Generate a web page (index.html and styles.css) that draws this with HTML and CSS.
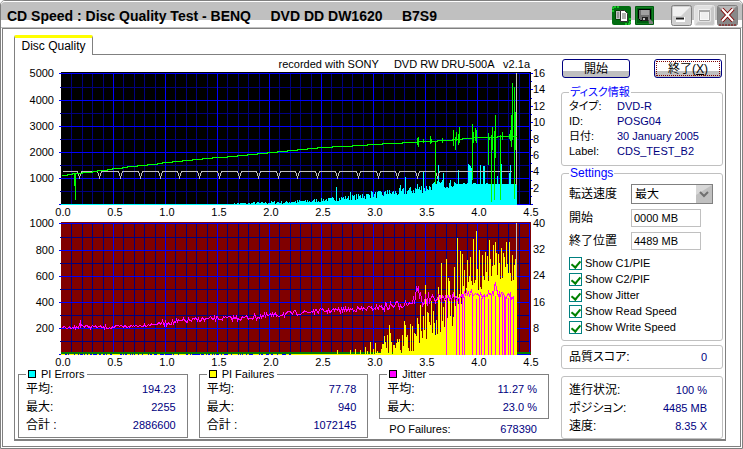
FILE: index.html
```html
<!DOCTYPE html>
<html lang="ja">
<head>
<meta charset="utf-8">
<title>CD Speed</title>
<link rel="stylesheet" href="styles.css">
</head>
<body>
<div class="window">
  <header class="titlebar">
    <h1 class="title">CD Speed : Disc Quality Test - BENQ     DVD DD DW1620     B7S9</h1>
    <div class="tools">
      <button class="tool" aria-label="Copy"><svg width="19" height="19" viewBox="0 0 19 19"><rect width="19" height="19" rx="2" fill="#006c10"/><path d="M1 6V1h6M18 12v6h-6" fill="none" stroke="#20e030" stroke-width="1.5" stroke-dasharray="2 1"/><path d="M3.500 4.500h5v9h-5z" fill="#c0c0c0" stroke="#004000"/><path d="M8.500 4.500h4l3 3v8h-7z" fill="#fff" stroke="#303030"/><path d="M10 8h4M10 10h4M10 12h4M5 7h2M5 9h2M5 11h2" stroke="#606060"/></svg></button>
      <button class="tool" aria-label="Save"><svg width="19" height="19" viewBox="0 0 19 19"><rect width="19" height="19" rx="1" fill="#005c10"/><rect x="1.500" y="1.500" width="16" height="16" fill="none" stroke="#108020"/><path d="M3.500 3.500h12v11h-10l-2-2z" fill="#707070" stroke="#000"/><path d="M6 4h8v5H6z" fill="#a0a0a0"/><path d="M7 11h6v4H7z" fill="#202020"/><path d="M8 12h2v2H8z" fill="#c0c0c0"/><path d="M13 11l5 5v2h-4z" fill="#808080"/></svg></button>
    </div>
    <div class="controls">
      <button class="control" aria-label="Minimize"><svg width="21" height="21" viewBox="0 0 21 21"><rect x=".5" y=".5" width="20" height="20" rx="2" fill="#d0d0d0" stroke="#808080"/><path d="M2 11V2h17L10 11z" fill="#f0f0f0"/><path d="M5 12h9v5H5z" fill="#fff"/><path d="M5 13.500h8" stroke="#202020" stroke-width="2"/></svg></button>
      <button class="control" aria-label="Maximize"><svg width="21" height="21" viewBox="0 0 21 21"><rect x=".5" y=".5" width="20" height="20" rx="2" fill="#c8c8c8" stroke="#e8e8e8"/><path d="M1 20V1h18z" fill="#e0e0e0"/><path d="M5.500 5.500h10v10h-10z" fill="#eee" stroke="#fff" stroke-width="2"/><path d="M5.500 5.500h10v10h-10z" fill="none" stroke="#a8a8a8"/><path d="M5 6h11" stroke="#a8a8a8" stroke-width="2"/></svg></button>
      <button class="control" aria-label="Close"><svg width="21" height="21" viewBox="0 0 21 21"><rect x=".5" y=".5" width="20" height="20" rx="2" fill="#888" stroke="#808080"/><path d="M1 1h19L10 10z" fill="#b8b8b8"/><path d="M5 4l11 12M16 4L5 16" stroke="#800000" stroke-width="4"/><path d="M5 4l11 12M16 4L5 16" stroke="#fff" stroke-width="2"/><path d="M2 20h17" stroke="#800000" stroke-dasharray="2 1"/></svg></button>
    </div>
  </header>
  <main class="client">
    <div class="tabs"><button class="tab">Disc Quality</button></div>
    <div class="panel">
      <section class="results">
        <svg id="charts" class="charts" viewBox="15 55 534 313" role="img" aria-label="Disc quality charts"></svg>
        <div class="stats">
          <fieldset class="stat">
            <legend><i class="swatch cyan"></i>PI Errors</legend>
            <dl class="rows"><div><dt>平均:</dt><dd>194.23</dd></div><div><dt>最大:</dt><dd>2255</dd></div><div><dt>合計 :</dt><dd>2886600</dd></div></dl>
          </fieldset>
          <fieldset class="stat">
            <legend><i class="swatch yellow"></i>PI Failures</legend>
            <dl class="rows"><div><dt>平均:</dt><dd>77.78</dd></div><div><dt>最大:</dt><dd>940</dd></div><div><dt>合計 :</dt><dd>1072145</dd></div></dl>
          </fieldset>
          <div class="jitter">
            <fieldset class="stat">
              <legend><i class="swatch magenta"></i>Jitter</legend>
              <dl class="rows"><div><dt>平均:</dt><dd>11.27 %</dd></div><div><dt>最大:</dt><dd>23.0 %</dd></div></dl>
            </fieldset>
            <dl class="rows po"><div><dt>PO Failures:</dt><dd>678390</dd></div></dl>
          </div>
        </div>
      </section>
      <aside class="side">
        <div class="buttons"><button class="push">開始</button><button class="push default">終了(<u>X</u>)</button></div>
        <fieldset class="group info">
          <legend>ディスク情報</legend>
          <dl><dt>タイプ:</dt><dd>DVD-R</dd><dt>ID:</dt><dd>POSG04</dd><dt>日付:</dt><dd>30 January 2005</dd><dt>Label:</dt><dd>CDS_TEST_B2</dd></dl>
        </fieldset>
        <fieldset class="group settings">
          <legend>Settings</legend>
          <div class="form">
            <label for="speed">転送速度</label>
            <div class="combo"><select id="speed"><option>最大</option></select><svg class="arrow" width="16" height="18" viewBox="0 0 16 18"><rect width="16" height="18" fill="#c0c0c0"/><path d="M0 10V0h16z" fill="#d8d8d8"/><path d="M4 7l4 4 4-4" fill="none" stroke="#707070" stroke-width="2"/></svg></div>
            <label for="start">開始</label><input id="start" type="text" value="0000 MB">
            <label for="end">終了位置</label><input id="end" type="text" value="4489 MB">
          </div>
          <label class="check"><input type="checkbox" checked>Show C1/PIE</label>
          <label class="check"><input type="checkbox" checked>Show C2/PIF</label>
          <label class="check"><input type="checkbox" checked>Show Jitter</label>
          <label class="check"><input type="checkbox" checked>Show Read Speed</label>
          <label class="check"><input type="checkbox" checked>Show Write Speed</label>
        </fieldset>
        <dl class="rows group score"><div><dt>品質スコア:</dt><dd>0</dd></div></dl>
        <dl class="rows group progress"><div><dt>進行状況:</dt><dd>100 %</dd></div><div><dt>ポジション:</dt><dd>4485 MB</dd></div><div><dt>速度:</dt><dd>8.35 X</dd></div></dl>
      </aside>
    </div>
  </main>
</div>
<script src="charts.js"></script>
</body>
</html>
```
FILE: styles.css
```css
* { box-sizing: border-box; }
body {
  margin: 0;
  background: #fff;
  color: #000;
  font: 12px/12px "Liberation Sans", "Noto Sans CJK JP", sans-serif;
  font-feature-settings: "palt";
}
button, input, select { font: inherit; color: inherit; font-feature-settings: inherit; }
dl, dd, h1 { margin: 0; }
fieldset { margin: 0; min-width: 0; }

.window {
  display: flex;
  flex-direction: column;
  min-height: 100vh;
  padding: 0 1px 1px;
  border: 1px solid #808080;
  border-radius: 5px 5px 0 0;
}
.titlebar {
  display: flex;
  align-items: center;
  height: 27px;
  margin: 0 -1px;
  padding: 2px 4px 0 6px;
  border-top: 1px solid #fff;
  border-bottom: 1px solid #c0c0c0;
  border-radius: 4px 4px 0 0;
  background: linear-gradient(#c0c0c0 18px, #fff 18px);
}
.title { flex: 1; font-size: 14px; line-height: 16px; white-space: pre; }
.tools, .controls { display: flex; align-items: center; gap: 4px; }
.tools { margin-right: 17px; }
.controls { gap: 2px; }
.tool, .control { padding: 0; border: 0; background: none; }
.tool svg, .control svg { display: block; }

.client {
  flex: 1;
  display: flex;
  flex-direction: column;
  padding: 6px 14px 5px 11px;
  border: 1px solid #808080;
}
.tabs { display: flex; }
.tab {
  position: relative;
  width: 79px;
  height: 20px;
  margin-bottom: -1px;
  padding: 0 0 1px;
  border: 1px solid #808080;
  border-top: 3px solid #ff0;
  border-bottom: 0;
  border-radius: 2px 2px 0 0;
  background: #fff;
}
.panel {
  flex: 1;
  display: grid;
  grid-template-columns: minmax(0, 1fr) 162px;
  gap: 12px;
  padding-right: 2px;
  border: 1px solid #808080;
  border-bottom: 2px solid #808080;
}
.charts { display: block; width: 100%; height: auto; font-size: 11px; }

.stats { display: grid; grid-template-columns: repeat(3, 1fr); gap: 11px; padding-left: 3px; }
.stats .stat { padding: 0 11px 2px 7px; border: 1px solid #808080; }
.stat legend { display: flex; align-items: center; gap: 5px; height: 12px; padding: 0 3px 0 2px; font-size: 11px; }
.swatch { width: 8px; height: 8px; border: 1px solid #000; }
.cyan { background: #0ff; }
.yellow { background: #ff0; }
.magenta { background: #f0f; }
.rows > div { display: flex; justify-content: space-between; line-height: 18px; }
.rows dd, .info dd { color: #000080; font-size: 11px; }
.po { padding: 1px 12px 0 10px; font-size: 11px; }

.side { padding-top: 4px; }
.buttons { display: flex; justify-content: space-between; margin: 0 1px 8px; }
.push {
  width: 68px;
  height: 19px;
  padding: 0;
  border: 1px solid #000080;
  border-radius: 3px;
  background: linear-gradient(#fff 11px, #c0c0c0 11px);
  line-height: 16px;
}
.default { outline: 1px dotted #800000; outline-offset: -3px; }
.group { border: 1px solid #c0c0c0; border-radius: 3px; }
.group legend { height: 12px; padding: 0 1px; color: #00f; }
.info { padding: 1px 7px 6px; }
.info legend, .info dt { font-size: 11px; }
.info dl { display: grid; grid-template-columns: 48px 1fr; line-height: 15px; white-space: nowrap; }
.settings { margin-top: 1px; padding: 5px 7px; }
.form { display: grid; grid-template-columns: 62px 1fr; align-items: center; row-gap: 5px; margin-bottom: 5px; }
.combo { display: grid; width: 82px; }
.combo > * { grid-area: 1 / 1; }
.combo select {
  width: 100%;
  height: 20px;
  padding: 0 3px;
  appearance: none;
  border: 1px solid #808080;
  border-radius: 0;
  background: #fff;
}
.arrow { justify-self: end; align-self: center; margin-right: 1px; pointer-events: none; }
.form input { width: 70px; height: 18px; padding: 0 2px; border: 1px solid #c0c0c0; font-size: 11px; }
.check { display: flex; align-items: center; gap: 3px; height: 16px; font-size: 11px; white-space: nowrap; }
.check input {
  width: 13px;
  height: 13px;
  margin: 0;
  appearance: none;
  border: 1px solid #008080;
  background: #fff;
}
.check input:checked::before {
  content: "";
  display: block;
  width: 4px;
  height: 7px;
  margin: 1px auto 0;
  border: solid #008000;
  border-width: 0 2px 2px 0;
  transform: rotate(40deg);
}
.score { margin-top: 4px; padding: 2px 15px 2px 7px; }
.progress { margin-top: 7px; padding: 4px 15px 3px 7px; }
```
FILE: charts.js
```js
const svg = document.getElementById("charts");
const NS = "http://www.w3.org/2000/svg";
const LEFT = 61, RIGHT = 530, END = 516;

function add(tag, attrs, text) {
  const el = document.createElementNS(NS, tag);
  for (const k in attrs) el.setAttribute(k, attrs[k]);
  if (text !== undefined) el.textContent = text;
  svg.appendChild(el);
}
const rect = (x, y, width, height, fill) => add("rect", { x, y, width, height, fill, "shape-rendering": "crispEdges" });
const label = (x, y, text, anchor) => add("text", { x, y: y + 4, "text-anchor": anchor }, text);
const path = (d, stroke) => add("path", { d, stroke, fill: "none", "shape-rendering": "crispEdges" });

let seed = 7;
function rnd() {
  seed = (seed * 16807) % 2147483647;
  return seed / 2147483647;
}
// Linear interpolation over [x, y] knots.
function at(knots, x) {
  for (let i = 1; i < knots.length; i++) {
    const [x0, y0] = knots[i - 1], [x1, y1] = knots[i];
    if (x <= x1) return y0 + (y1 - y0) * (x - x0) / (x1 - x0);
  }
  return knots[knots.length - 1][1];
}

function grid(top, rows, fill) {
  rect(LEFT, top - 1, RIGHT - LEFT + 1, 133, fill);
  for (let i = 1; i < 45; i++) if (i % 5) {
    rect(LEFT + Math.round(i * 10.4), top, 1, 132, "#000080");
  }
  for (let i = 0; i < 5; i++) rect(60, top + 14 + i * 26, 469, 1, "#000080");
  for (let i = 1; i < 10; i++) rect(LEFT + i * 52, top, 1, 132, "#00f");
  for (let i = 0; i < 6; i++) {
    const y = i ? top + 1 + i * 26 : top;
    rect(59, y, 470, 1, "#00f");
    label(54, y, rows[i], "end");
  }
  for (let i = 0; i < 10; i++) label(63 + i * 52, top + 139, (i / 2).toFixed(1), "middle");
}

label(530, 64, "recorded with SONY \u00a0 \u00a0 DVD RW DRU-500A \u00a0 v2.1a", "end");

grid(73, [5000, 4000, 3000, 2000, 1000, ""], "#000");
for (let i = 0; i <= 16; i++) rect(531, 73 + Math.round(i * 8.2), i % 2 ? 1 : 2, 1, "#00f");
for (let i = 0; i < 8; i++) label(533, 73 + Math.round(i * 16.4), 16 - i * 2, "start");

// PI errors
const errors = [[61, 1], [230, 1], [270, 2], [300, 3], [330, 5], [370, 9], [400, 12], [425, 16], [440, 20], [460, 21], [516, 21]];
const errorPeaks = { 336: 187, 350: 192, 362: 194, 371: 191, 378: 191, 387: 190, 400: 185, 405: 177, 417: 184, 423: 172, 438: 165, 443: 173, 458: 170, 468: 164, 469: 165, 470: 166, 471: 168, 480: 165, 483: 166, 484: 166, 497: 176, 501: 164, 509: 173, 510: 165 };
for (let x = LEFT; x <= END; x++) {
  let h = at(errors, x);
  if (x > 232 && x < 455) h += (rnd() - .4) * Math.min(9, 2 + h * .5);
  else if (x >= 455) h += rnd() < .3 ? 1 : 0;
  h = Math.max(1, Math.round(h));
  const y = errorPeaks[x] || 205 - h;
  rect(x, y, 1, 205 - y, "#0ff");
}

// Write speed
let d = "M63 171.5";
for (const x of [79, 99, 120, 140, 160, 179, 199, 219, 239, 258, 278, 297, 317, 337, 358, 378, 397, 417, 437]) {
  d += `H${x - 2}L${x - 1}.5 173.5L${x}.5 178.5L${x + 1}.5 173.5L${x + 3} 171.5`;
}
path(d + "H512", "#c0c0c0");
rect(END, 73, 1, 112, "#c0c0c0");

// Read speed
const speed = [[62, 175], [75, 173], [93, 171], [113, 168], [165, 162], [217, 157], [250, 154], [269, 152], [321, 147], [373, 144], [425, 141], [455, 139], [477, 137], [510, 136], [516, 136]];
d = "";
for (let x = 62; x < 516; x += 5) d += `${d ? "L" : "M"}${x} ${Math.round(at(speed, x)) + .5}H${x + 5}`;
path(d, "#0f0");
const speedPeaks = [[74, 174, 186], [75, 174, 200], [417, 138, 145], [418, 137, 147], [423, 139, 143], [430, 136, 144], [431, 139, 143], [435, 141, 184], [442, 138, 143], [453, 130, 146], [455, 137, 150], [456, 132, 141], [458, 134, 145], [459, 127, 143], [472, 124, 180], [473, 132, 143], [475, 128, 141], [476, 130, 143], [488, 133, 165], [489, 137, 140], [491, 135, 202], [492, 127, 150], [494, 131, 200], [495, 115, 158], [500, 135, 200], [502, 132, 140], [509, 134, 139], [510, 130, 141], [511, 115, 147], [512, 83, 140], [514, 87, 199], [515, 112, 150]];
for (const [x, y0, y1] of speedPeaks) rect(x, y0, 1, y1 - y0, "#0f0");

grid(223, [1000, 800, 600, 400, 200, ""], "#800000");
for (let i = 0; i < 5; i++) label(533, 223 + Math.round(i * 26.2), 40 - i * 8, "start");
rect(LEFT, 352, 470, 2, "#008000");

// PI failures
const failures = { 337: 350, 350: 350, 355: 349, 360: 350, 365: 347, 367: 351, 370: 342, 373: 349, 375: 343, 377: 351, 384: 336, 385: 342, 387: 335, 389: 325, 390: 333, 395: 348, 397: 339, 399: 339, 402: 335, 404: 321, 405: 325, 407: 335, 410: 324, 412: 326, 414: 333, 415: 334, 417: 318, 418: 324, 420: 305, 421: 331, 423: 316, 425: 285, 427: 312, 428: 313, 429: 322, 431: 301, 433: 311, 434: 323, 436: 320, 438: 287, 439: 295, 441: 263, 443: 307, 445: 300, 446: 259, 447: 318, 448: 278, 449: 281, 451: 301, 454: 267, 457: 238, 460: 251, 462: 254, 464: 270, 467: 260, 470: 257, 473: 239, 476: 231, 477: 269, 479: 250, 482: 255, 485: 252, 487: 256, 489: 240, 490: 259, 493: 245, 495: 242, 496: 253, 498: 254, 501: 248, 503: 253, 504: 257, 506: 242, 507: 264, 509: 242, 510: 273, 512: 255, 515: 259 };
const floor = [[61, 354], [365, 354], [385, 353], [400, 350], [415, 342], [430, 336], [445, 327], [453, 318], [463, 296], [470, 285], [480, 282], [492, 274], [505, 275], [516, 277]];
for (let x = LEFT; x <= END; x++) {
  const wobble = x > 380 ? (rnd() - .6) * 20 : 0;
  const y = failures[x] || Math.min(354, Math.round(at(floor, x) + wobble));
  if (x > 290 || rnd() > .5) rect(x, y, 1, 355 - y, "#ff0");
}

// Jitter
const jitter = [[62, 327], [78, 327], [80, 322], [83, 326], [110, 327], [140, 325], [170, 322], [200, 319], [250, 317], [269, 315], [300, 312], [330, 310], [370, 308], [400, 304], [413, 301], [416, 290], [419, 293], [421, 300], [440, 298], [460, 296], [472, 292], [480, 294], [493, 293], [495, 282], [497, 295], [514, 296]];
d = "";
for (let x = 62; x < 514; x++) {
  const spread = x < 160 ? 3 : x < 380 ? 5 : x < 412 ? 9 : x < 430 ? 15 : 7;
  const y = Math.round(at(jitter, x) + (rnd() - .5) * spread);
  d += `${d ? "L" : "M"}${x}.5 ${y}.5`;
}
path(d, "#f0f");
rect(80, 320, 1, 8, "#f0f");
for (const x of [446, 456, 459, 462, 464, 472, 476, 479, 481, 484, 488, 491, 495, 499, 502, 504, 505, 508, 510, 513]) {
  const y = 293 + Math.round(rnd() * 6);
  rect(x, y, 1, 355 - y, "#f0f");
}
rect(END, 223, 1, 54, "#c0c0c0");
```
